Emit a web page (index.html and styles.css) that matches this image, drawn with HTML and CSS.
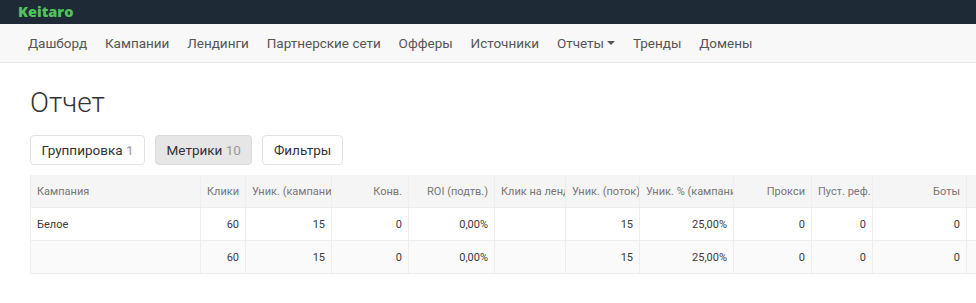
FILE: index.html
```html
<!DOCTYPE html>
<html lang="ru">
<head>
<meta charset="utf-8">
<title>Keitaro — Отчет</title>
<link rel="stylesheet" href="styles.css">
</head>
<body>
<header class="topbar"><span class="logo">Keitaro</span></header>
<nav class="mainnav">
  <a class="nav-item">Дашборд</a>
  <a class="nav-item">Кампании</a>
  <a class="nav-item">Лендинги</a>
  <a class="nav-item">Партнерские сети</a>
  <a class="nav-item">Офферы</a>
  <a class="nav-item">Источники</a>
  <a class="nav-item">Отчеты <span class="caret"></span></a>
  <a class="nav-item">Тренды</a>
  <a class="nav-item">Домены</a>
</nav>
<main class="content">
  <h1 class="title">Отчет</h1>
  <div class="toolbar">
    <button class="btn">Группировка <span class="count">1</span></button>
    <button class="btn active">Метрики <span class="count">10</span></button>
    <button class="btn">Фильтры</button>
  </div>
  <div class="table-wrap">
    <table class="report">
      <colgroup>
        <col class="c-camp"><col class="c-clicks"><col class="c-uniq"><col class="c-conv"><col class="c-roi"><col class="c-lp"><col class="c-uflow"><col class="c-upct"><col class="c-proxy"><col class="c-ref"><col class="c-bots"><col class="c-rev">
      </colgroup>
      <thead>
        <tr>
          <th class="left">Кампания</th>
          <th>Клики</th>
          <th>Уник. (кампания)</th>
          <th>Конв.</th>
          <th>ROI (подтв.)</th>
          <th class="left">Клик на лендинг</th>
          <th>Уник. (поток)</th>
          <th>Уник. % (кампания)</th>
          <th>Прокси</th>
          <th>Пуст. реф.</th>
          <th>Боты</th>
          <th>Доход</th>
        </tr>
      </thead>
      <tbody>
        <tr>
          <td class="left">Белое</td>
          <td>60</td><td>15</td><td>0</td><td>0,00%</td><td></td><td>15</td><td>25,00%</td><td>0</td><td>0</td><td>0</td><td>0</td>
        </tr>
        <tr class="total">
          <td class="left"></td>
          <td>60</td><td>15</td><td>0</td><td>0,00%</td><td></td><td>15</td><td>25,00%</td><td>0</td><td>0</td><td>0</td><td>0</td>
        </tr>
      </tbody>
    </table>
  </div>
</main>
</body>
</html>
```
FILE: styles.css
```css
html, body {
  margin: 0;
  padding: 0;
  background: #fff;
  overflow: hidden;
}
body {
  font-family: Roboto, "Liberation Sans", sans-serif;
  color: #333;
}
.topbar {
  height: 24px;
  background: #1e2b37;
  display: flex;
  align-items: center;
  padding-left: 18px;
}
.logo {
  font-family: "Open Sans", sans-serif;
  font-weight: 800;
  font-size: 14.5px;
  color: #52c25a;
  line-height: 1;
}
.mainnav {
  height: 38px;
  background: #f8f8f8;
  border-bottom: 1px solid #e7e7e7;
  display: flex;
  align-items: center;
  padding-left: 19px;
}
.nav-item {
  font-size: 13.5px;
  color: #555;
  padding: 0 8.9px;
  display: flex;
  align-items: center;
  gap: 3px;
}
.caret {
  display: inline-block;
  width: 0;
  height: 0;
  border-left: 4px solid transparent;
  border-right: 4px solid transparent;
  border-top: 4px solid #555;
}
.content {
  padding-left: 30px;
}
.title {
  font-size: 28px;
  font-weight: 300;
  color: #333;
  margin: 23px 0 0;
  line-height: 33px;
}
.toolbar {
  display: flex;
  gap: 10px;
  margin-top: 16px;
}
.btn {
  font-family: Roboto, "Liberation Sans", sans-serif;
  font-size: 13.5px;
  color: #333;
  background: #fff;
  border: 1px solid #e3e3e3;
  border-radius: 4px;
  height: 30px;
  padding: 0 10.5px;
  line-height: 28px;
}
.btn.active {
  background: #e6e6e6;
  border-color: #dadada;
}
.count {
  color: #999;
}
.table-wrap {
  margin-top: 10px;
  overflow: hidden;
}
.report {
  border-collapse: collapse;
  table-layout: fixed;
  width: 1016px;
  font-size: 11px;
}
.c-camp { width: 170px; }
.c-clicks { width: 45px; }
.c-uniq { width: 86px; }
.c-conv { width: 77px; }
.c-roi { width: 86px; }
.c-lp { width: 71px; }
.c-uflow { width: 74px; }
.c-upct { width: 94px; }
.c-proxy { width: 78px; }
.c-ref { width: 61px; }
.c-bots { width: 94px; }
.c-rev { width: 80px; }
.report th, .report td {
  height: 32px;
  padding: 0 6px;
  text-align: right;
  white-space: nowrap;
  overflow: hidden;
  border: 1px solid #ededed;
  border-top: 0;
}
.report th {
  background: #f5f5f5;
  color: #777;
  font-weight: 400;
}
.report td {
  color: #3a3a3a;
}
.report .left {
  text-align: left;
}
.report tr.total td {
  background: #fafafa;
}
```
